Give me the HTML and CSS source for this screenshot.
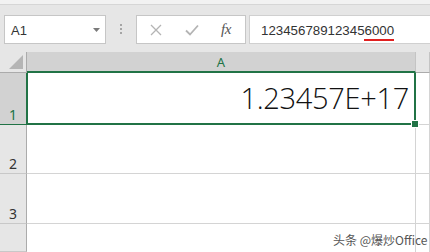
FILE: index.html
```html
<!DOCTYPE html>
<html>
<head>
<meta charset="utf-8">
<link rel="stylesheet" href="styles.css">
</head>
<body>
<div class="app">
  <div class="topstrip"></div>
  <div class="toolbar">
    <div class="namebox">
      <span class="name">A1</span>
      <svg class="caret" width="7" height="4" viewBox="0 0 7 4"><path d="M0 0H7L3.5 4Z" fill="#7a7a7a"/></svg>
    </div>
    <div class="grip"><i></i><i></i><i></i></div>
    <div class="btns">
      <svg class="btn" width="12" height="12" viewBox="0 0 12 12"><path d="M1 1L11 11M11 1L1 11" stroke="#b4b4b4" stroke-width="1.3" fill="none"/></svg>
      <svg class="btn" width="14" height="12" viewBox="0 0 14 12"><path d="M1 6.5L5 10.5L13 1.5" stroke="#b4b4b4" stroke-width="1.8" fill="none"/></svg>
      <span class="fx">fx</span>
    </div>
    <div class="formula">
      <span class="ftext">123456<span class="err">789123456000</span></span>
    </div>
  </div>
  <div class="sheet">
    <div class="corner"><svg width="14" height="14" viewBox="0 0 14 14"><path d="M14 0V14H0Z" fill="#b5b5b5"/></svg></div>
    <div class="colhead sel">A</div>
    <div class="colhead"></div>

    <div class="rowhead sel">1</div>
    <div class="cell a1"><span class="val">1.23457E+17</span><span class="handle"></span></div>
    <div class="cell"></div>

    <div class="rowhead">2</div>
    <div class="cell"></div>
    <div class="cell"></div>

    <div class="rowhead">3</div>
    <div class="cell"></div>
    <div class="cell"></div>

    <div class="rowhead"></div>
    <div class="cell last"><span class="mark">头条 @爆炒Office</span></div>
    <div class="cell last"></div>
  </div>
</div>
</body>
</html>
```
FILE: styles.css
```css
html, body { margin: 0; padding: 0; }
body { width: 430px; height: 252px; overflow: hidden; background: #e6e6e6; font-family: "Liberation Sans", Arial, sans-serif; }
.app { display: flex; flex-direction: column; height: 252px; }
.topstrip { height: 4px; background: #f2f2f2; border-bottom: 1px solid #d6d6d6; }
.toolbar { height: 47px; display: flex; align-items: flex-start; padding-top: 10px; box-sizing: border-box; padding-left: 4px; }
.namebox { background: #fff; border: 1px solid #c6c6c6; display: flex; align-items: center; justify-content: space-between; padding: 0 5px 0 6px; box-sizing: border-box; width: 102px; height: 29px; }
.name { font-size: 13px; color: #333; padding-top: 1px; }
.grip { width: 30px; display: flex; flex-direction: column; align-items: center; gap: 2px; padding-top: 9px; height: 29px; box-sizing: border-box; }
.grip i { display: block; width: 2px; height: 2px; background: #a5a5a5; }
.btns { width: 110px; height: 29px; box-sizing: border-box; background: #fff; border: 1px solid #c6c6c6; display: flex; align-items: center; padding-left: 13px; }
.btns .btn { margin-right: 23px; }
.btns .btn + .btn { margin-right: 22px; }
.fx { font-family: "Liberation Serif", serif; font-style: italic; font-size: 15px; color: #555; letter-spacing: -0.5px; }
.formula { margin-left: 3px; flex: 1; height: 29px; box-sizing: border-box; background: #fff; border: 1px solid #d0d0d0; border-right: none; display: flex; align-items: center; padding-left: 11px; }
.ftext { font-size: 13.3px; color: #333; padding-top: 1px; }
.err { background: linear-gradient(#e02020, #e02020) no-repeat; background-size: 30px 2px; background-position: right 0 bottom 0; padding-bottom: 3px; }
.sheet { flex: 1; display: grid; grid-template-columns: 27px 389px 14px; grid-template-rows: 21px 52px 49px 50px 1fr; }
.corner { background: #e6e6e6; border-right: 1px solid #ababab; border-bottom: 1px solid #ababab; box-sizing: border-box; display: flex; align-items: flex-end; justify-content: flex-end; padding: 0 3px 3px 0; }
.colhead { background: #e6e6e6; border-bottom: 1px solid #ababab; border-right: 1px solid #c4c4c4; box-sizing: border-box; font-family: "Noto Sans", sans-serif; font-size: 13px; color: #217346; text-align: center; line-height: 20px; }
.colhead.sel { background: #d2d2d2; border-bottom: 2px solid #217346; }
.rowhead { background: #e6e6e6; border-right: 1px solid #ababab; border-bottom: 1px solid #c8c8c8; box-sizing: border-box; font-family: "Noto Sans", sans-serif; font-size: 14px; color: #333; display: flex; align-items: flex-end; justify-content: center; line-height: 18px; }
.rowhead.sel { background: #d2d2d2; color: #217346; border-bottom: 1px solid #217346; }
.cell { background: #fff; border-right: 1px solid #d4d4d4; border-bottom: 1px solid #d4d4d4; box-sizing: border-box; position: relative; }
.cell.last { border-bottom: none; }
.a1 { border: 2px solid #217346; border-top: none; margin-left: -1px; display: flex; align-items: flex-end; justify-content: flex-end; padding-right: 5px; }
.val { font-family: "Open Sans", "Lato", sans-serif; font-weight: 300; font-size: 29px; color: #111; line-height: 40px; padding-bottom: 5px; letter-spacing: -0.3px; }
.handle { position: absolute; right: -5px; bottom: -5px; width: 6px; height: 6px; background: #217346; border: 1px solid #fff; z-index: 2; }
.mark { position: absolute; left: 306px; bottom: 4px; z-index: 3; font-family: "Noto Sans CJK SC", sans-serif; font-size: 12px; color: #555; text-shadow: 0 0 1px #fff; white-space: nowrap; }
```
